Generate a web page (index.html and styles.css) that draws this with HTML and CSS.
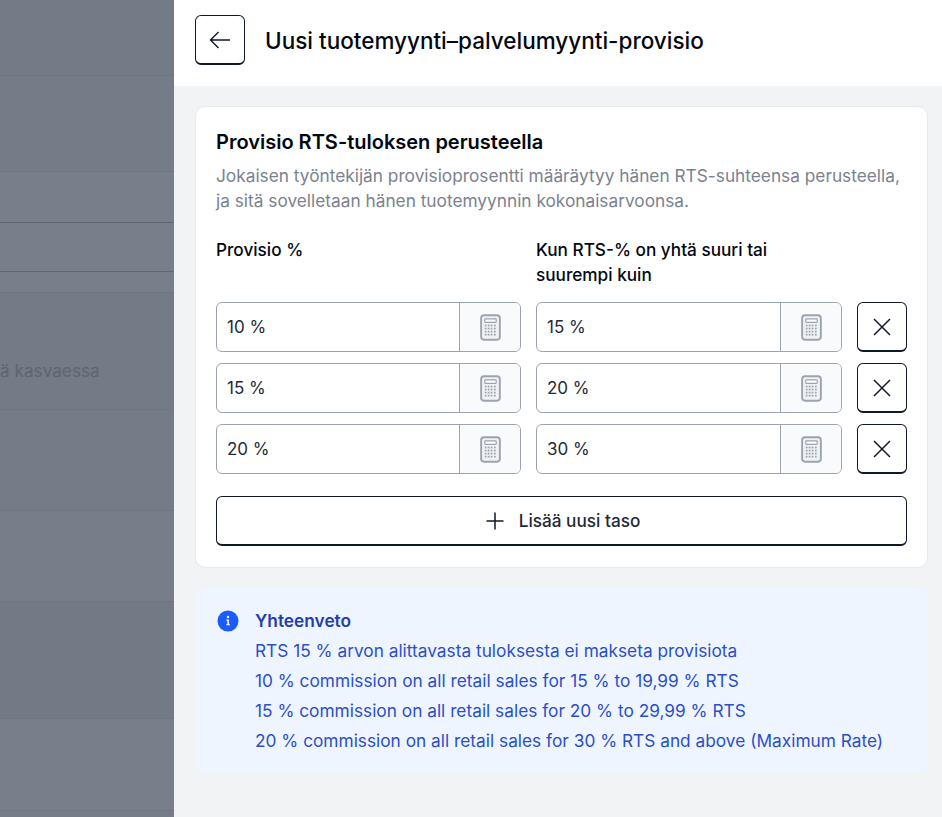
FILE: index.html
```html
<!DOCTYPE html>
<html lang="fi">
<head>
  <meta charset="UTF-8">
  <meta name="viewport" content="width=device-width, initial-scale=1">
  <title>Uusi tuotemyynti–palvelumyynti-provisio</title>
  <link rel="stylesheet" href="styles.css">
</head>
<body>

<!-- Taustasivu himmennettynä -->
<div class="backdrop">
  <div class="back-row back-row-1"></div>
  <div class="back-row back-row-2"></div>
  <div class="back-row back-row-3 dark"></div>
  <div class="back-row back-row-4 dark"></div>
  <div class="back-row back-row-5"></div>
  <div class="back-row back-row-6"><span class="back-text">ä kasvaessa</span></div>
  <div class="back-row back-row-7"></div>
  <div class="back-row back-row-8"></div>
  <div class="back-row back-row-9"></div>
  <div class="back-row back-row-10"></div>
</div>

<div class="panel">
  <header class="panel-header">
    <button class="icon-btn back-btn" aria-label="Takaisin">
      <svg width="24" height="24" viewBox="0 0 24 24" fill="none" stroke="#111827" stroke-width="1.4">
        <path d="M22 12H2.5M10.5 4l-8 8 8 8"/>
      </svg>
    </button>
    <h1>Uusi tuotemyynti–palvelumyynti-provisio</h1>
  </header>

  <div class="panel-body">
    <section class="card">
      <h2>Provisio RTS-tuloksen perusteella</h2>
      <p class="card-desc">Jokaisen työntekijän provisioprosentti määräytyy hänen RTS-suhteensa perusteella, ja sitä sovelletaan hänen tuotemyynnin kokonaisarvoonsa.</p>

      <div class="tier-labels">
        <div>Provisio %</div>
        <div>Kun RTS-% on yhtä suuri tai suurempi kuin</div>
      </div>

      <div class="tier-row">
        <div class="field"><span class="field-value">10 %</span><span class="field-addon"><svg class="calc"><use href="#calc-icon"/></svg></span></div>
        <div class="field"><span class="field-value">15 %</span><span class="field-addon"><svg class="calc"><use href="#calc-icon"/></svg></span></div>
        <button class="icon-btn" aria-label="Poista"><svg class="close"><use href="#close-icon"/></svg></button>
      </div>
      <div class="tier-row">
        <div class="field"><span class="field-value">15 %</span><span class="field-addon"><svg class="calc"><use href="#calc-icon"/></svg></span></div>
        <div class="field"><span class="field-value">20 %</span><span class="field-addon"><svg class="calc"><use href="#calc-icon"/></svg></span></div>
        <button class="icon-btn" aria-label="Poista"><svg class="close"><use href="#close-icon"/></svg></button>
      </div>
      <div class="tier-row">
        <div class="field"><span class="field-value">20 %</span><span class="field-addon"><svg class="calc"><use href="#calc-icon"/></svg></span></div>
        <div class="field"><span class="field-value">30 %</span><span class="field-addon"><svg class="calc"><use href="#calc-icon"/></svg></span></div>
        <button class="icon-btn" aria-label="Poista"><svg class="close"><use href="#close-icon"/></svg></button>
      </div>

      <button class="add-btn">
        <svg width="24" height="24" viewBox="0 0 24 24" fill="none" stroke="#111827" stroke-width="1.5">
          <path d="M12 3.5v17M3.5 12h17"/>
        </svg>
        Lisää uusi taso
      </button>
    </section>

    <section class="summary">
      <svg class="info" width="22" height="22" viewBox="0 0 22 22">
        <circle cx="11" cy="11" r="10.5" fill="#1a5cff"/>
        <circle cx="11" cy="7" r="1.2" fill="#fff"/>
        <path d="M9.4 9.6h2.5v4.6h1v1.1H9.3v-1.1h1.1v-3.5h-1z" fill="#fff"/>
      </svg>
      <div class="summary-text">
        <strong>Yhteenveto</strong>
        <div>RTS 15 % arvon alittavasta tuloksesta ei makseta provisiota</div>
        <div>10 % commission on all retail sales for 15 % to 19,99 % RTS</div>
        <div>15 % commission on all retail sales for 20 % to 29,99 % RTS</div>
        <div>20 % commission on all retail sales for 30 % RTS and above (Maximum Rate)</div>
      </div>
    </section>
  </div>
</div>

<!-- Ikonit -->
<svg class="icon-defs" aria-hidden="true">
  <symbol id="calc-icon" viewBox="0 0 22 28">
    <rect x="1.2" y="1.2" width="19.6" height="25.6" rx="3" fill="#f0f2f5" stroke="#9ca3af" stroke-width="2"/>
    <rect x="5" y="5" width="12" height="3.6" rx=".6" fill="#fff" stroke="#9ca3af" stroke-width="1.2"/>
    <g fill="#9ca3af">
      <rect x="5" y="11" width="1.8" height="1.8"/><rect x="8.1" y="11" width="1.8" height="1.8"/><rect x="11.2" y="11" width="1.8" height="1.8"/><rect x="14.6" y="11" width="1.8" height="1.8"/>
      <rect x="5" y="14.2" width="1.8" height="1.8"/><rect x="8.1" y="14.2" width="1.8" height="1.8"/><rect x="11.2" y="14.2" width="1.8" height="1.8"/><rect x="14.6" y="14.2" width="1.8" height="1.8"/>
      <rect x="5" y="17.4" width="1.8" height="1.8"/><rect x="8.1" y="17.4" width="1.8" height="1.8"/><rect x="11.2" y="17.4" width="1.8" height="1.8"/><rect x="14.6" y="17.4" width="1.8" height="1.8"/>
      <rect x="5" y="20.6" width="1.8" height="1.8"/><rect x="8.1" y="20.6" width="1.8" height="1.8"/><rect x="11.2" y="20.6" width="1.8" height="1.8"/><rect x="14.6" y="20.6" width="1.8" height="1.8"/>
    </g>
  </symbol>
  <symbol id="close-icon" viewBox="0 0 24 24">
    <path d="M4 4l16 16M20 4L4 20" fill="none" stroke="#111827" stroke-width="1.5"/>
  </symbol>
</svg>

</body>
</html>
```

FILE: styles.css
```css
* {
  box-sizing: border-box;
}
html, body {
  height: 100%;
}
body {
  margin: 0;
  display: flex;
  height: 817px;
  overflow: hidden;
  font-family: Inter, "Liberation Sans", sans-serif;
  color: #111827;
}
.icon-defs {
  display: none;
}

/* taustasivu */
.backdrop {
  width: 174px;
  flex-shrink: 0;
  background-color: #757d89;
  overflow: hidden;
}
.back-row {
  border-bottom: 1px solid #6e7682;
  display: flex;
  align-items: flex-end;
}
.back-row.dark {
  border-bottom-color: #5f6775;
}
.back-row-1 { height: 76px; background-color: #737b87; }
.back-row-2 { height: 96px; background-color: #747c88; }
.back-row-3 { height: 51px; background-color: #787e8a; }
.back-row-4 { height: 49px; background-color: #787e8a; }
.back-row-5 { height: 21px; background-color: #787e8a; }
.back-row-6 { height: 117px; background-color: #737b87; padding-bottom: 26px; }
.back-row-7 { height: 101px; background-color: #757c88; }
.back-row-8 { height: 91px; background-color: #777e8a; }
.back-row-9 { height: 117px; background-color: #727a86; }
.back-row-10 { height: 92px; background-color: #787e8a; }
.back-text {
  font-size: 17.2px;
  line-height: 24px;
  color: #5d6572;
  white-space: nowrap;
}

/* paneeli */
.panel {
  flex: 1;
  display: flex;
  flex-direction: column;
  background-color: #f2f3f5;
}
.panel-header {
  height: 86px;
  flex-shrink: 0;
  background: white;
  display: flex;
  align-items: flex-start;
  gap: 20px;
  padding: 15px 21px 0;
}
.panel-header h1 {
  margin: 0;
  font-size: 22.5px;
  line-height: 52px;
  font-weight: 500;
  color: #030712;
}
.icon-btn {
  width: 50px;
  height: 50px;
  flex-shrink: 0;
  padding: 0;
  display: flex;
  align-items: center;
  justify-content: center;
  background: white;
  border: 1px solid #111827;
  border-bottom-width: 2px;
  border-radius: 6px;
}
.close {
  width: 24px;
  height: 24px;
}
.panel-body {
  padding: 20px 14px 0 21px;
}

.card {
  background: white;
  border: 1px solid #e7e9ec;
  border-radius: 10px;
  padding: 20px;
  height: 462px;
}
.card h2 {
  margin: 0;
  font-size: 20px;
  line-height: 30px;
  font-weight: 600;
  color: #030712;
}
.card-desc {
  margin: 6px 0 0;
  font-size: 17.28px;
  line-height: 25px;
  color: #7b828e;
}
.tier-labels {
  display: grid;
  grid-template-columns: 305px 306px 50px;
  gap: 15px;
  margin-top: 24px;
  font-size: 17.2px;
  line-height: 25px;
  font-weight: 500;
  color: #030712;
}
.tier-labels div:nth-child(2) {
  width: 260px;
}
.tier-row {
  display: grid;
  grid-template-columns: 305px 306px 50px;
  gap: 15px;
  margin-top: 11px;
}
.tier-labels + .tier-row {
  margin-top: 15px;
}
.field {
  height: 50px;
  display: flex;
  background: white;
  border: 1px solid #9ca3af;
  border-radius: 6px;
  overflow: hidden;
}
.field-value {
  flex: 1;
  display: flex;
  align-items: center;
  padding-left: 10px;
  font-size: 17px;
  color: #1f2937;
}
.field-addon {
  width: 61px;
  display: flex;
  align-items: center;
  justify-content: center;
  background-color: #f9fafb;
  border-left: 1px solid #9ca3af;
}
.calc {
  width: 21px;
  height: 27px;
}
.add-btn {
  width: 100%;
  height: 50px;
  margin-top: 22px;
  display: flex;
  align-items: center;
  justify-content: center;
  gap: 12px;
  background: white;
  border: 1px solid #111827;
  border-bottom-width: 2px;
  border-radius: 6px;
  font-family: inherit;
  font-size: 17.2px;
  font-weight: 500;
  color: #1f2937;
}

.summary {
  display: flex;
  gap: 16px;
  margin-top: 20px;
  height: 185px;
  padding: 19px 22px;
  background-color: #eff5ff;
  border-radius: 10px;
}
.info {
  flex-shrink: 0;
  margin-top: 3px;
}
.summary-text {
  font-size: 17.3px;
  line-height: 30px;
  color: #2b4fc7;
}
.summary-text strong {
  display: block;
  font-weight: 600;
  color: #1e40af;
  line-height: 27px;
  margin-bottom: 2px;
}
```
